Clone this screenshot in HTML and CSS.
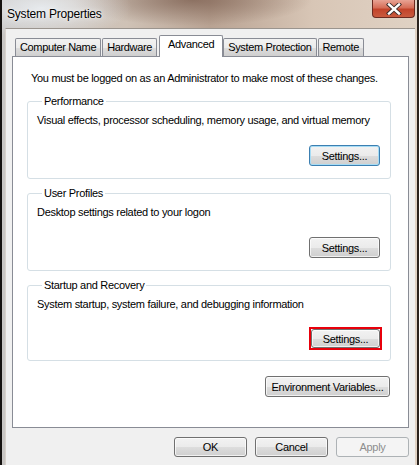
FILE: index.html
```html
<!DOCTYPE html>
<html lang="en">
<head>
    <meta charset="UTF-8">
    <title>System Properties</title>
    <link rel="stylesheet" href="styles.css">
</head>
<body>
    <div class="window">
        <div class="titlebar">
            <span class="title">System Properties</span>
            <div class="close">
                <svg width="16" height="12" viewBox="0 0 16 12">
                    <path d="M3 1.5 L13 10.5 M13 1.5 L3 10.5" stroke="#3a2a28" stroke-width="4.2" stroke-linecap="square"/>
                    <path d="M3 1.5 L13 10.5 M13 1.5 L3 10.5" stroke="#ffffff" stroke-width="2.4" stroke-linecap="square"/>
                </svg>
            </div>
        </div>
        <div class="client">
            <div class="tabs">
                <div class="tab">Computer Name</div>
                <div class="tab">Hardware</div>
                <div class="tab active">Advanced</div>
                <div class="tab">System Protection</div>
                <div class="tab">Remote</div>
            </div>
            <div class="panel">
                <p class="note">You must be logged on as an Administrator to make most of these changes.</p>

                <fieldset class="group">
                    <legend>Performance</legend>
                    <p>Visual effects, processor scheduling, memory usage, and virtual memory</p>
                    <div class="actions"><button class="btn default">Settings...</button></div>
                </fieldset>

                <fieldset class="group">
                    <legend>User Profiles</legend>
                    <p>Desktop settings related to your logon</p>
                    <div class="actions"><button class="btn">Settings...</button></div>
                </fieldset>

                <fieldset class="group">
                    <legend>Startup and Recovery</legend>
                    <p>System startup, system failure, and debugging information</p>
                    <div class="actions"><span class="mark"><button class="btn">Settings...</button></span></div>
                </fieldset>

                <div class="actions env"><button class="btn wide">Environment Variables...</button></div>
            </div>
            <div class="footer">
                <button class="btn big">OK</button>
                <button class="btn big">Cancel</button>
                <button class="btn big" disabled>Apply</button>
            </div>
        </div>
    </div>
</body>
</html>
```

FILE: styles.css
```css
html, body {
    margin: 0;
    padding: 0;
}
body {
    width: 419px;
    height: 465px;
    overflow: hidden;
    font-family: "Liberation Sans", Arial, sans-serif;
    font-size: 11px;
    letter-spacing: -0.3px;
    color: #000;
    white-space: nowrap;
}
.window {
    height: 465px;
    box-sizing: border-box;
    border-left: 2px solid #151210;
    border-right: 2px solid #2a221d;
    background:
        radial-gradient(ellipse 90px 30px at 40px 8px, rgba(235, 240, 245, 0.85), rgba(235, 240, 245, 0) 100%),
        radial-gradient(ellipse 120px 26px at 190px 0px, rgba(120, 90, 75, 0.7), rgba(120, 90, 75, 0) 100%),
        linear-gradient(to right, #c8c6c4 0%, #cfc2b6 30%, #b8a292 50%, #d8c6b6 75%, #e0d2c4 100%);
    display: flex;
    flex-direction: column;
}
.titlebar {
    height: 28px;
    display: flex;
    align-items: flex-start;
    justify-content: space-between;
    flex-shrink: 0;
}
.title {
    margin: 7px 0 0 5px;
    font-size: 12px;
    letter-spacing: -0.2px;
    text-shadow: 0 0 6px rgba(255, 255, 255, 0.9), 0 0 2px rgba(255, 255, 255, 0.8);
}
.close {
    width: 43px;
    height: 18px;
    margin-right: 2px;
    box-sizing: border-box;
    border: 1px solid #6b2a20;
    border-top: none;
    border-radius: 0 0 4px 4px;
    background: linear-gradient(to bottom, #e8a394 0%, #d66e58 45%, #c2432a 55%, #c95a3e 100%);
    display: flex;
    align-items: center;
    justify-content: center;
}
.client {
    flex: 1;
    margin-left: 3px;
    margin-right: 2px;
    background: #f0f0f0;
    border-left: 1px solid #d8d2cc;
    border-top: 1px solid #9a948e;
    padding: 6px 6px 0 6px;
}
.tabs {
    display: flex;
    align-items: flex-end;
    height: 21px;
    padding-left: 3px;
    position: relative;
    z-index: 1;
}
.tab {
    height: 17px;
    line-height: 17px;
    padding: 0 4px;
    letter-spacing: -0.35px;
    border: 1px solid #898c95;
    border-bottom: none;
    border-radius: 2px 2px 0 0;
    background: linear-gradient(to bottom, #f2f2f2 0%, #ebebeb 50%, #dddddd 51%, #cfcfcf 100%);
    margin-right: 1px;
}
.tab.active {
    height: 21px;
    line-height: 17px;
    padding: 0 8px;
    margin: 0 0 0 1px;
    background: #fff;
    position: relative;
    top: 1px;
}
.panel {
    height: 372px;
    box-sizing: border-box;
    background: #fff;
    border: 1px solid #898c95;
    padding: 14px 17px 0 14px;
}
.note {
    margin: 0 0 8px 4px;
    line-height: 15px;
}
.group {
    margin: 0 0 7px 0;
    padding: 4px 10px 12px 9px;
    border: 1px solid #d5dfe5;
    border-radius: 3px;
}
.group legend {
    padding: 0 2px;
    margin-left: 5px;
    line-height: 15px;
}
.group p {
    margin: 0;
    line-height: 15px;
}
.actions {
    display: flex;
    justify-content: flex-end;
    margin-top: 17px;
}
.btn {
    font-family: inherit;
    font-size: 11px;
    letter-spacing: -0.3px;
    color: #000;
    height: 21px;
    width: 71px;
    padding: 0;
    border: 1px solid #707070;
    border-radius: 3px;
    background: linear-gradient(to bottom, #f2f2f2 0%, #ebebeb 50%, #dddddd 51%, #cfcfcf 100%);
    box-shadow: inset 0 0 0 1px rgba(255, 255, 255, 0.7);
}
.btn.default {
    border-color: #3c7fb1;
    box-shadow: inset 0 0 0 1px #a6dcf5;
}
.mark {
    display: flex;
    border: 2px solid #e8000b;
    margin: -2px -2px -2px 0;
}
.mark .btn {
    height: 19px;
    width: 69px;
}
.btn.wide {
    width: 125px;
}
.btn.big {
    width: 73px;
    height: 20px;
}
.btn:disabled {
    color: #8d8d8d;
    border-color: #adb2b5;
    background: #f4f4f4;
    box-shadow: none;
}
.env {
    margin-top: 15px;
    margin-right: 1px;
}
.footer {
    display: flex;
    justify-content: flex-end;
    gap: 8px;
    padding: 9px 0 0 0;
}
```
